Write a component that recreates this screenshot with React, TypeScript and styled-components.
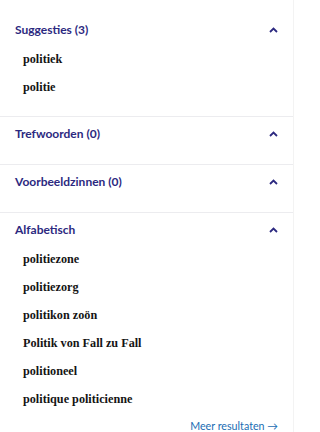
import React from 'react';
import styled, { createGlobalStyle } from 'styled-components';

const GlobalStyle = createGlobalStyle`
  html, body {
    margin: 0;
    padding: 0;
    background: #ffffff;
  }
`;

const Panel = styled.div`
  width: 294px;
  min-height: 432px;
  padding-top: 13px;
  box-sizing: border-box;
  background: white;
  border-right: 1px solid #f3f3f3;
`;

const Section = styled.section<{ $empty?: boolean; $last?: boolean }>`
  padding: 10px 15px ${props => (props.$empty ? '23px' : '15px')} 15px;
  border-bottom: 1px solid #ececef;
  ${props => props.$last && `
    padding-bottom: 0;
    margin-left: 11px;
    padding-left: 4px;
  `}
`;

const SectionHeader = styled.div`
  display: flex;
  align-items: center;
  justify-content: space-between;
  height: 14px;
`;

const SectionTitle = styled.h3`
  margin: 0;
  font-family: Lato, 'Liberation Sans', sans-serif;
  font-size: 12px;
  font-weight: 700;
  color: #2c2980;
  line-height: 14px;
`;

const List = styled.ul`
  list-style: none;
  margin: 0;
  padding: 8px 0 0 8px;
`;

const Item = styled.li`
  font-family: 'Liberation Serif', serif;
  font-weight: 700;
  font-size: 12.2px;
  line-height: 28px;
  color: #141414;
`;

const Footer = styled.div`
  display: flex;
  justify-content: flex-end;
  padding-top: 6px;
  height: 14px;
`;

const MoreLink = styled.a`
  font-family: Lato, 'Liberation Sans', sans-serif;
  font-size: 10.7px;
  line-height: 14px;
  color: #1a6db3;
  text-decoration: none;
`;

const Chevron = () => (
  <svg width="9" height="6" viewBox="0 0 9 6">
    <path d="M1 5 L4.5 1.5 L8 5" fill="none" stroke="#2c2980" strokeWidth="1.8" />
  </svg>
);

const sections = [
  { title: 'Suggesties (3)', items: ['politiek', 'politie'] },
  { title: 'Trefwoorden (0)', items: [] as string[] },
  { title: 'Voorbeeldzinnen (0)', items: [] as string[] },
  {
    title: 'Alfabetisch',
    items: [
      'politiezone',
      'politiezorg',
      'politikon zoön',
      'Politik von Fall zu Fall',
      'politioneel',
      'politique politicienne',
    ],
    more: true,
  },
];

const App: React.FC = () => (
  <>
    <GlobalStyle />
    <Panel>
      {sections.map((section, index) => (
        <Section key={index} $empty={section.items.length === 0} $last={section.more}>
          <SectionHeader>
            <SectionTitle>{section.title}</SectionTitle>
            <Chevron />
          </SectionHeader>
          {section.items.length > 0 && (
            <List>
              {section.items.map(item => (
                <Item key={item}>{item}</Item>
              ))}
            </List>
          )}
          {section.more && (
            <Footer>
              <MoreLink href="#">Meer resultaten →</MoreLink>
            </Footer>
          )}
        </Section>
      ))}
    </Panel>
  </>
);

export default App;
